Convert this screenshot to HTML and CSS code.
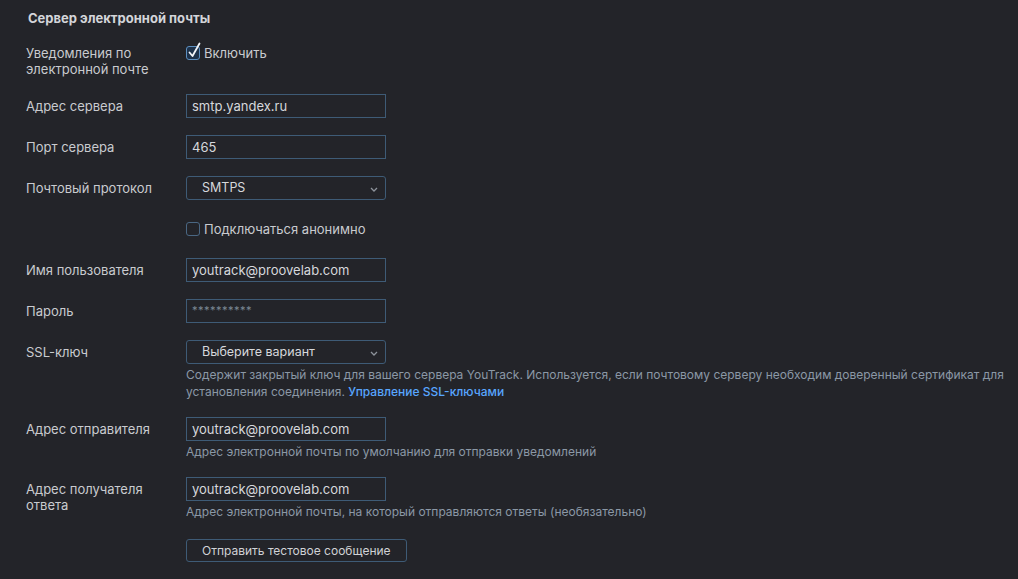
FILE: index.html
```html
<!DOCTYPE html>
<html lang="ru">
<head>
    <meta charset="UTF-8">
    <meta name="viewport" content="width=device-width, initial-scale=1.0">
    <title>Сервер электронной почты</title>
    <link rel="stylesheet" href="styles.css">
</head>
<body>
    <div class="mail">
        <h2 class="title">Сервер электронной почты</h2>

        <div class="row">
            <div class="label two">Уведомления по электронной почте</div>
            <div class="field">
                <label class="check">
                    <span class="box on">
                        <svg width="16" height="18" viewBox="0 0 16 18"><path d="M3.5 10.5 L6.5 14 L13.5 1.5" fill="none" stroke="#f2f4f7" stroke-width="1.8" stroke-linecap="round" stroke-linejoin="round"/></svg>
                    </span>
                    Включить
                </label>
            </div>
        </div>

        <div class="row">
            <div class="label">Адрес сервера</div>
            <div class="field"><div class="input">smtp.yandex.ru</div></div>
        </div>

        <div class="row">
            <div class="label">Порт сервера</div>
            <div class="field"><div class="input">465</div></div>
        </div>

        <div class="row">
            <div class="label">Почтовый протокол</div>
            <div class="field">
                <div class="select">SMTPS
                    <svg class="chev" width="8" height="5" viewBox="0 0 8 5"><path d="M1 1 L4 4 L7 1" fill="none" stroke="#8d939b" stroke-width="1.3"/></svg>
                </div>
            </div>
        </div>

        <div class="row">
            <div class="label"></div>
            <div class="field">
                <label class="check mid">
                    <span class="box"></span>
                    Подключаться анонимно
                </label>
            </div>
        </div>

        <div class="row">
            <div class="label">Имя пользователя</div>
            <div class="field"><div class="input">youtrack@proovelab.com</div></div>
        </div>

        <div class="row">
            <div class="label">Пароль</div>
            <div class="field"><div class="input pass">**********</div></div>
        </div>

        <div class="row">
            <div class="label">SSL-ключ</div>
            <div class="field">
                <div class="select">Выберите вариант
                    <svg class="chev" width="8" height="5" viewBox="0 0 8 5"><path d="M1 1 L4 4 L7 1" fill="none" stroke="#8d939b" stroke-width="1.3"/></svg>
                </div>
                <div class="hint">Содержит закрытый ключ для вашего сервера YouTrack. Используется, если почтовому серверу необходим доверенный сертификат для установления соединения. <a href="#">Управление SSL-ключами</a></div>
            </div>
        </div>

        <div class="row">
            <div class="label">Адрес отправителя</div>
            <div class="field">
                <div class="input">youtrack@proovelab.com</div>
                <div class="hint">Адрес электронной почты по умолчанию для отправки уведомлений</div>
            </div>
        </div>

        <div class="row">
            <div class="label">Адрес получателя ответа</div>
            <div class="field">
                <div class="input">youtrack@proovelab.com</div>
                <div class="hint">Адрес электронной почты, на который отправляются ответы (необязательно)</div>
            </div>
        </div>

        <div class="row">
            <div class="label"></div>
            <div class="field"><button class="btn">Отправить тестовое сообщение</button></div>
        </div>
    </div>
</body>
</html>
```

FILE: styles.css
```css
*{
    padding: 0;
    margin: 0;
    box-sizing: border-box;
}
body{
    background-color: #232429;
    color: #c9cbcf;
    font-family: Inter, "Noto Sans", sans-serif;
    font-size: 13px;
    line-height: 16px;
}
.mail{
    padding: 10px 8px 0 26px;
}
.title{
    font-size: 13px;
    font-weight: 700;
    color: #d3d5d9;
    padding-left: 2px;
    margin-bottom: 19px;
}
.row{
    display: grid;
    grid-template-columns: 160px 1fr;
    margin-bottom: 17px;
}
.label{
    padding-top: 4px;
    padding-right: 10px;
}
.label.two{
    padding-top: 0;
}
.field{
    min-width: 0;
}
.check{
    display: flex;
    align-items: center;
    gap: 4px;
    height: 16px;
    color: #c9cbcf;
}
.check.mid{
    height: 24px;
}
.box{
    position: relative;
    width: 14px;
    height: 14px;
    border: 1px solid #4a6783;
    border-radius: 3px;
    flex-shrink: 0;
}
.box.on{
    background-color: #1d3149;
    border-color: #5d8fc0;
}
.box svg{
    position: absolute;
    left: -1px;
    top: -5px;
}
.input,.select{
    width: 200px;
    height: 24px;
    border: 1px solid #3e5b76;
    padding: 0 5px;
    line-height: 22px;
    color: #d6d8dc;
}
.input.pass{
    color: #7d8894;
    font-size: 11px;
    letter-spacing: 0.5px;
    line-height: 20px;
}
.select{
    position: relative;
    border-radius: 3px;
    padding-left: 15px;
    font-size: 12.5px;
}
.chev{
    position: absolute;
    right: 7px;
    top: 10px;
}
.hint{
    margin-top: 2px;
    font-size: 12px;
    line-height: 17px;
    color: #8b98a6;
}
.hint a{
    color: #58a6ff;
    text-decoration: none;
    font-weight: 500;
}
.btn{
    margin-top: 2px;
    height: 23px;
    padding: 0 15px;
    background: transparent;
    border: 1px solid #3e5b76;
    border-radius: 3px;
    color: #d0d2d6;
    font-family: Inter, "Noto Sans", sans-serif;
    font-size: 12px;
}
```
